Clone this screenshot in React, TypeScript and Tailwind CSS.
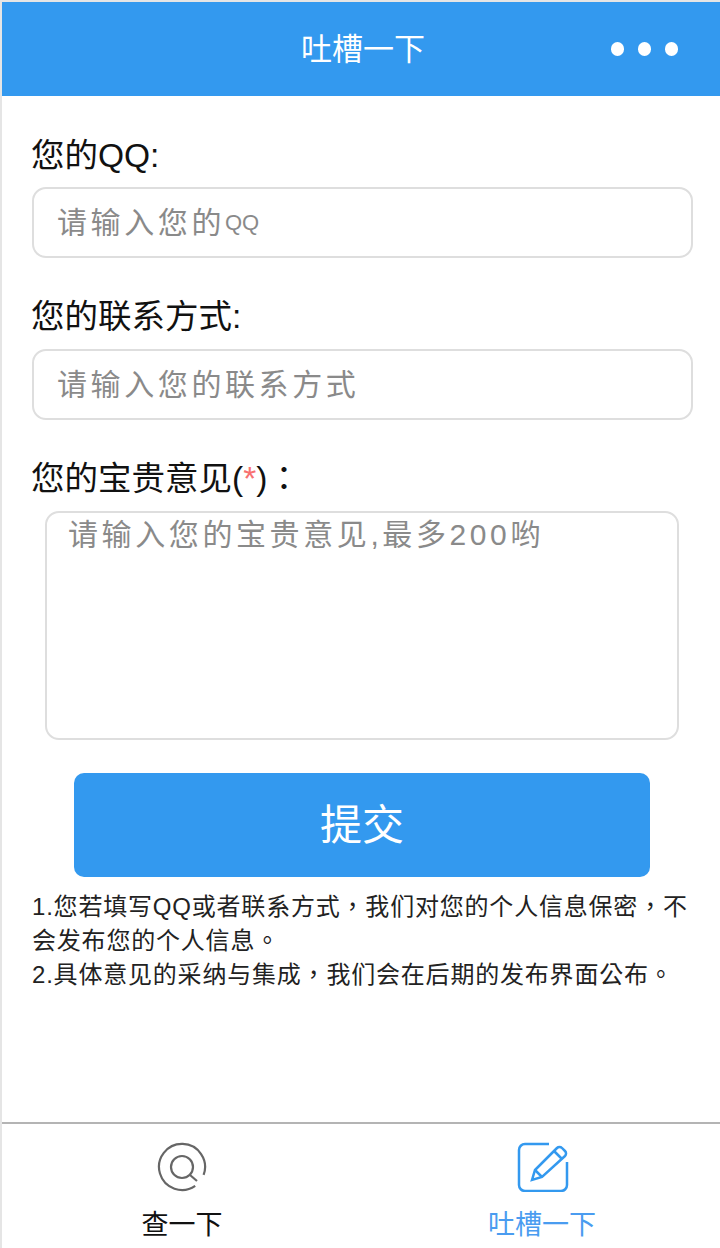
const cjk = "font-['Liberation_Sans','Noto_Sans_CJK_SC',sans-serif]";
const cjkTc = "font-['Liberation_Sans','Noto_Sans_CJK_TC',sans-serif]";

export default function App() {
  return (
    <div className={`h-[1248px] w-[720px] flex flex-col bg-white border-l-2 border-t-2 border-[#e5e5e5] overflow-hidden text-[#111] ${cjk}`}>
      {/* Header */}
      <div className="relative h-[94px] shrink-0 bg-[#3399ef] flex items-center justify-center text-white text-[31px]">
        <span className="ml-[4px] mt-[3px]">吐槽一下</span>
        <div className="absolute right-[42px] top-[40px] flex gap-[14px]">
          <span className="w-[13px] h-[14px] rounded-full bg-white" />
          <span className="w-[13px] h-[14px] rounded-full bg-white" />
          <span className="w-[13px] h-[14px] rounded-full bg-white" />
        </div>
      </div>

      {/* Form */}
      <div className="flex-1 px-[30px] pt-[40px]">
        <label className="block -ml-[1px] text-[33.5px] leading-[40px]">您的QQ:</label>
        <div className="mt-[11px] h-[71px] w-[661px] rounded-[14px] border-2 border-[#dedede] pl-[23px] flex items-center text-[30px] tracking-[3.6px] text-[#8a8a8a]">
          请输入您的<span className="text-[22px] tracking-normal">QQ</span>
        </div>

        <label className="block -ml-[1px] mt-[39px] text-[33.5px] leading-[40px]">您的联系方式:</label>
        <div className="mt-[12px] h-[71px] w-[661px] rounded-[14px] border-2 border-[#dedede] pl-[23px] flex items-center text-[30px] tracking-[3.6px] text-[#8a8a8a]">
          请输入您的联系方式
        </div>

        <label className={`block -ml-[1px] mt-[39px] text-[33.5px] leading-[40px] ${cjkTc}`}>
          您的宝贵意见(<span className="text-[#f87171]">*</span>)：
        </label>
        <div className="mt-[12px] ml-[13px] h-[229px] w-[634px] rounded-[14px] border-2 border-[#dedede] pl-[21px] pt-[2px] text-[30px] leading-[40px] tracking-[3.6px] text-[#8a8a8a]">
          请输入您的宝贵意见,最多200哟
        </div>

        <button className="block mt-[33px] ml-[42px] h-[104px] w-[576px] rounded-[10px] bg-[#3399ef] text-white text-[42px]">
          提交
        </button>

        <p className={`mt-[13px] text-[24px] leading-[34px] tracking-[0.8px] text-[#222] w-[670px] ${cjkTc}`}>
          1.您若填写QQ或者联系方式，我们对您的个人信息保密，不会发布您的个人信息。
          <br />
          2.具体意见的采纳与集成，我们会在后期的发布界面公布。
        </p>
      </div>

      {/* Tab bar */}
      <div className="h-[126px] shrink-0 border-t-2 border-[#b4b4b4] flex">
        <div className="w-[360px] flex flex-col items-center pt-[18px]">
          <svg width="50" height="50" viewBox="0 0 50 50" fill="none" stroke="#666" strokeWidth="2.2">
            <path d="M46.6 32.9A23 23 0 1 0 38.2 43.8" />
            <circle cx="25" cy="25" r="11" />
            <path d="M33 33l7 6" />
          </svg>
          <span className="mt-[13px] text-[27px] leading-[40px] text-[#111]">查一下</span>
        </div>
        <div className="w-[358px] flex flex-col items-center pt-[18px]">
          <svg width="52" height="50" viewBox="0 0 52 50" fill="none" stroke="#3399ef" strokeWidth="2.5" className="ml-[4px]">
            <path d="M32 2H8a6 6 0 0 0-6 6v35a6 6 0 0 0 6 6h36a6 6 0 0 0 6-6V20" />
            <path d="M15 38l3-10L40 6a3.5 3.5 0 0 1 5 0l3 3a3.5 3.5 0 0 1 0 5L25 35z" />
            <path d="M37 9l8 8M18 28l7 7" />
          </svg>
          <span className="mt-[13px] ml-[2px] text-[27px] leading-[40px] text-[#4a9cf0]">吐槽一下</span>
        </div>
      </div>
    </div>
  );
}
